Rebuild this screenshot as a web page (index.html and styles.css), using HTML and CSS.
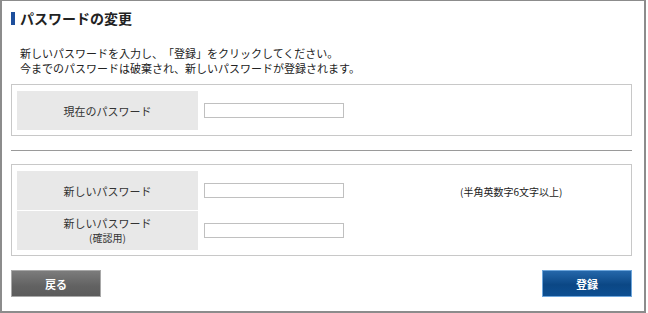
FILE: index.html
```html
<!DOCTYPE html>
<html lang="ja">
<head>
<meta charset="utf-8">
<title>パスワードの変更</title>
<link rel="stylesheet" href="styles.css">
</head>
<body>
<div class="frame">
  <h1 class="title">パスワードの変更</h1>
  <p class="lead">新しいパスワードを入力し、「登録」をクリックしてください。<br>今までのパスワードは破棄され、新しいパスワードが登録されます。</p>
  <div class="box">
    <div class="row">
      <div class="label">現在のパスワード</div>
      <div class="field"><input class="input" type="password"></div>
      <div class="note"></div>
    </div>
  </div>
  <hr class="sep">
  <div class="box">
    <div class="row">
      <div class="label">新しいパスワード</div>
      <div class="field"><input class="input" type="password"></div>
      <div class="note">(半角英数字6文字以上)</div>
    </div>
    <div class="row">
      <div class="label label-2"><span>新しいパスワード</span><span class="sub">(確認用)</span></div>
      <div class="field"><input class="input" type="password"></div>
      <div class="note"></div>
    </div>
  </div>
  <div class="actions">
    <button class="btn btn-back" type="button">戻る</button>
    <button class="btn btn-submit" type="button">登録</button>
  </div>
</div>
</body>
</html>
```
FILE: styles.css
```css
html, body {
  margin: 0;
  padding: 0;
  background: #fff;
}
body {
  font-family: "Noto Sans CJK JP", "Noto Sans", sans-serif;
  color: #222;
  text-spacing-trim: space-all;
}
.frame {
  border-style: solid;
  border-color: #8c8c8c;
  border-width: 1px 2px 2px 2px;
  padding: 11px 12px 0 9px;
  box-sizing: border-box;
  width: 646px;
  height: 313px;
}
.title {
  margin: 0;
  height: 13px;
  border-left: 4px solid #1e4f9c;
  padding-left: 5px;
  font-size: 14px;
  line-height: 13px;
  font-weight: bold;
  color: #222;
}
.lead {
  margin: 21px 0 0 0;
  padding-left: 9px;
  font-size: 11px;
  line-height: 15px;
  color: #222;
}
.box {
  margin-top: 8px;
  border: 1px solid #c8c8c8;
  padding: 6px 5px 5px 5px;
  display: flex;
  flex-direction: column;
  gap: 1px;
}
.row {
  display: grid;
  grid-template-columns: 181px 146px 1fr;
  height: 39px;
}
.label {
  background: #e8e8e8;
  color: #333;
  font-size: 11px;
  line-height: 14px;
  display: flex;
  flex-direction: column;
  align-items: center;
  justify-content: center;
  text-align: center;
}
.label-2 {
  line-height: 15px;
}
.sub {
  font-size: 10px;
  line-height: 14px;
}
.field {
  display: flex;
  align-items: center;
  padding-left: 6px;
}
.input {
  width: 140px;
  height: 15px;
  box-sizing: border-box;
  border: 1px solid #c0c0c0;
  background: #fff;
  margin: 0;
  padding: 0;
}
.note {
  font-size: 10px;
  color: #222;
  display: flex;
  align-items: center;
  padding-left: 116px;
  padding-top: 1px;
}
.sep {
  margin: 14px 0 13px 0;
  border: 0;
  border-top: 1px solid #9a9a9a;
  height: 0;
}
.sep + .box {
  margin-top: 0;
}
.actions {
  margin-top: 14px;
  display: flex;
  justify-content: space-between;
}
.btn {
  width: 90px;
  height: 27px;
  box-sizing: border-box;
  font-family: "Noto Sans CJK JP", "Noto Sans", sans-serif;
  font-size: 11px;
  font-weight: bold;
  color: #fff;
  padding: 0;
  margin: 0;
  cursor: pointer;
}
.btn-back {
  border: 1px solid #a8a8a8;
  background: linear-gradient(#7c7c7c, #626262 60%, #5c5c5c);
}
.btn-submit {
  border: 1px solid #6ea6dc;
  background: linear-gradient(#2567aa, #0b4785 55%, #0d4f92);
}
```
